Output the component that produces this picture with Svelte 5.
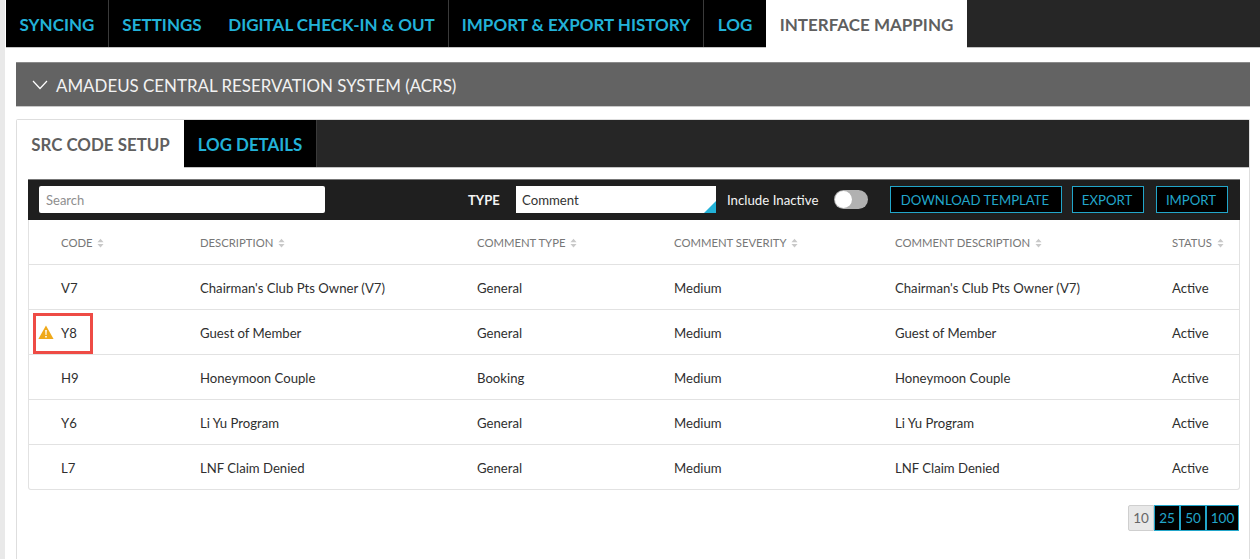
<script>
	const topTabs = [
		{ label: 'SYNCING', width: 103, sep: true },
		{ label: 'SETTINGS', width: 106, sep: false },
		{ label: 'DIGITAL CHECK-IN & OUT', width: 234, sep: true },
		{ label: 'IMPORT & EXPORT HISTORY', width: 255, sep: true },
		{ label: 'LOG', width: 62, sep: false }
	];

	const columns = ['CODE', 'DESCRIPTION', 'COMMENT TYPE', 'COMMENT SEVERITY', 'COMMENT DESCRIPTION', 'STATUS'];

	const rows = [
		{ code: 'V7', desc: "Chairman's Club Pts Owner (V7)", type: 'General' },
		{ code: 'Y8', desc: 'Guest of Member', type: 'General', flagged: true },
		{ code: 'H9', desc: 'Honeymoon Couple', type: 'Booking' },
		{ code: 'Y6', desc: 'Li Yu Program', type: 'General' },
		{ code: 'L7', desc: 'LNF Claim Denied', type: 'General' }
	];
</script>

<div class="page">
	<nav class="top-tabs">
		{#each topTabs as tab}
			<a href="#top" class="top-tab" class:sep={tab.sep} style="width: {tab.width}px">{tab.label}</a>
		{/each}
		<a href="#top" class="top-tab active">INTERFACE MAPPING</a>
	</nav>

	<main class="content">
		<header class="accordion">
			<svg class="chevron" viewBox="0 0 16 10" width="16" height="10">
				<path d="M1 1l7 7.5L15 1" fill="none" stroke="#fff" stroke-width="1.2" />
			</svg>
			<span>AMADEUS CENTRAL RESERVATION SYSTEM (ACRS)</span>
		</header>

		<section class="card">
			<div class="sub-tabs">
				<a href="#top" class="sub-tab active">SRC CODE SETUP</a>
				<a href="#top" class="sub-tab">LOG DETAILS</a>
			</div>

			<div class="inner">
				<div class="toolbar">
					<input class="search" type="text" placeholder="Search" />
					<span class="type-label">TYPE</span>
					<div class="select">Comment</div>
					<span class="inactive-label">Include Inactive</span>
					<span class="toggle"><span class="knob"></span></span>
					<button class="outline download">DOWNLOAD TEMPLATE</button>
					<button class="outline export">EXPORT</button>
					<button class="outline import">IMPORT</button>
				</div>

				<table>
					<colgroup>
						<col style="width: 171px" />
						<col style="width: 277px" />
						<col style="width: 197px" />
						<col style="width: 221px" />
						<col style="width: 277px" />
						<col />
					</colgroup>
					<thead>
						<tr>
							{#each columns as col}
								<th>
									{col}
									<svg class="sort" viewBox="0 0 8 10" width="7" height="10">
										<path d="M4 0l3.5 4h-7zM4 10L.5 6h7z" fill="#c9c9c9" />
									</svg>
								</th>
							{/each}
						</tr>
					</thead>
					<tbody>
						{#each rows as row}
							<tr>
								<td class:flagged={row.flagged}>
									{#if row.flagged}
										<svg class="warn" viewBox="0 0 16 14" width="16" height="14">
											<path d="M8 .5L15.6 14H.4z" fill="#efa91b" />
											<path d="M7.2 5h1.6l-.3 5h-1zM7.2 11h1.6v1.6H7.2z" fill="#fff" />
										</svg>
										<span class="highlight"></span>
									{/if}
									{row.code}
								</td>
								<td>{row.desc}</td>
								<td>{row.type}</td>
								<td>Medium</td>
								<td>{row.desc}</td>
								<td>Active</td>
							</tr>
						{/each}
					</tbody>
				</table>

				<div class="pager">
					<button class="current">10</button>
					<button>25</button>
					<button>50</button>
					<button class="last">100</button>
				</div>
			</div>
		</section>
	</main>
</div>

<style>
	:global(body) {
		margin: 0;
		background: #fff;
	}

	.page {
		height: 559px;
		overflow: hidden;
		box-sizing: border-box;
		padding-left: 1px;
		position: relative;
		background: #fff;
		font-family: Lato, 'Liberation Sans', sans-serif;
		color: #2b2b2b;
		border-left: 5px solid #e9e9e9;
	}

	.top-tabs {
		display: flex;
		height: 47px;
		background: #262626;
		border-bottom: 1px solid #c4c4c4;
		box-sizing: content-box;
	}

	.top-tab {
		display: flex;
		align-items: center;
		justify-content: center;
		box-sizing: border-box;
		padding-top: 1px;
		background: #000;
		color: #22b2d8;
		font-size: 17px;
		font-weight: 700;
		text-decoration: none;
		white-space: nowrap;
	}

	.top-tab.sep {
		border-right: 1px solid #3a3a3a;
	}

	.top-tab.active {
		width: 201px;
		background: #fff;
		color: #5f5f5f;
		height: 48px;
	}

	.content {
		padding: 14px 10px 0;
	}

	.accordion {
		display: flex;
		align-items: center;
		gap: 8px;
		height: 45px;
		box-sizing: border-box;
		padding-left: 16px;
		padding-top: 1px;
		background: #636363;
		border-top: 1px solid #8a8a8a;
		border-bottom: 1px solid #c9c9c9;
		color: #f2f2f2;
		font-size: 16.9px;
	}

	.card {
		margin-top: 12px;
		height: 460px;
		border: 1px solid #dedede;
		border-bottom: 0;
		border-radius: 2px 2px 0 0;
		box-sizing: border-box;
	}

	.sub-tabs {
		display: flex;
		height: 47px;
		background: #262626;
		border-bottom: 1px solid #c4c4c4;
		box-sizing: content-box;
	}

	.sub-tab {
		display: flex;
		align-items: center;
		justify-content: center;
		width: 133px;
		box-sizing: border-box;
		padding-top: 1px;
		background: #000;
		color: #22b2d8;
		font-size: 16.9px;
		font-weight: 700;
		text-decoration: none;
		border-right: 1px solid #3a3a3a;
	}

	.sub-tab.active {
		width: 167px;
		height: 48px;
		background: #fff;
		color: #5f5f5f;
		border-right: 0;
	}

	.inner {
		padding: 11px 9px 0 11px;
	}

	.toolbar {
		display: flex;
		align-items: center;
		height: 41px;
		box-sizing: border-box;
		padding-left: 11px;
		padding-bottom: 2px;
		background: #1f1f1f;
		border-top: 1px solid #777;
	}

	.search {
		width: 286px;
		height: 27px;
		box-sizing: border-box;
		padding: 1px 7px 0;
		border: 0;
		border-radius: 2px;
		background: #fff;
		font: 13px Lato, sans-serif;
	}

	.search::placeholder {
		color: #8e8e8e;
		opacity: 1;
	}

	.type-label {
		margin-left: 143px;
		width: 48px;
		padding-top: 2px;
		color: #f4f4f4;
		font-size: 13px;
		font-weight: 700;
	}

	.select {
		position: relative;
		width: 200px;
		height: 27px;
		line-height: 28px;
		box-sizing: border-box;
		padding-left: 6px;
		background: #fff;
		font-size: 13.2px;
		color: #333;
	}

	.select::after {
		content: '';
		position: absolute;
		right: 0;
		bottom: 0;
		border-style: solid;
		border-width: 0 0 12px 12px;
		border-color: transparent transparent #22b2d8 transparent;
	}

	.inactive-label {
		margin-left: 11px;
		width: 107px;
		padding-top: 2px;
		color: #f4f4f4;
		font-size: 13.25px;
		white-space: nowrap;
	}

	.toggle {
		display: flex;
		align-items: center;
		width: 34px;
		height: 19px;
		border-radius: 10px;
		background: #b1b1b1;
	}

	.knob {
		width: 17px;
		height: 17px;
		margin-left: 1px;
		border-radius: 50%;
		background: #fff;
	}

	.outline {
		height: 27px;
		box-sizing: border-box;
		padding: 1px 2px 0 0;
		background: #000;
		border: 1px solid #22a6ca;
		color: #22a6ca;
		font: 13.2px Lato, sans-serif;
		white-space: nowrap;
	}

	.download {
		margin-left: 22px;
		width: 172px;
	}

	.export {
		margin-left: 10px;
		width: 72px;
	}

	.import {
		margin-left: 12px;
		width: 72px;
	}

	table {
		width: 1212px;
		table-layout: fixed;
		border-collapse: separate;
		border-spacing: 0;
		border: 1px solid #e2e2e2;
		border-top: 0;
		border-radius: 0 0 3px 3px;
		font-size: 13.15px;
	}

	th {
		height: 45px;
		box-sizing: border-box;
		padding: 1px 0 0;
		text-align: left;
		color: #777;
		font-size: 11.3px;
		font-weight: 400;
		border-bottom: 1px solid #e2e2e2;
		white-space: nowrap;
	}

	.sort {
		margin-left: 2px;
		vertical-align: -1px;
	}

	td {
		position: relative;
		height: 45px;
		box-sizing: border-box;
		padding: 1px 0 0;
		color: #2f2f2f;
		border-bottom: 1px solid #e2e2e2;
		white-space: nowrap;
	}

	tbody tr:last-child td {
		border-bottom: 0;
		height: 44px;
	}

	th:first-child,
	td:first-child {
		padding-left: 32px;
	}

	.warn {
		position: absolute;
		left: 9px;
		top: 15px;
	}

	.highlight {
		position: absolute;
		left: 4px;
		top: 3px;
		width: 60px;
		height: 41px;
		box-sizing: border-box;
		border: 3px solid #ee4b45;
	}

	.pager {
		display: flex;
		justify-content: flex-end;
		margin-top: 15px;
		margin-right: 1px;
	}

	.pager button {
		width: 26px;
		height: 26px;
		box-sizing: border-box;
		padding: 0;
		background: #000;
		border: 1px solid #22a6ca;
		color: #22a6ca;
		font: 13.5px Lato, sans-serif;
	}

	.pager .current {
		background: #e8e8e8;
		border-color: #cfcfcf;
		color: #666;
		border-radius: 2px 0 0 2px;
	}

	.pager .last {
		width: 33px;
	}
</style>
